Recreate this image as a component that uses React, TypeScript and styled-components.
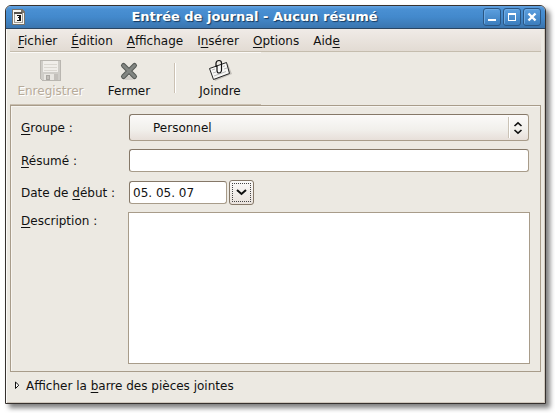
import React from "react";
import styled, { createGlobalStyle, css } from "styled-components";

const edge = "#a89c8a";
const edgeDark = "#857868";

const GlobalStyle = createGlobalStyle`
  * { box-sizing: border-box; }
  body { margin: 0; background: #fff; }
  body, button, input, select, textarea {
    font-family: "DejaVu Sans", sans-serif;
    font-size: 12px;
    line-height: 16px;
    color: #111;
  }
`;

const Desktop = styled.div`
  display: flex;
  min-height: 100vh;
  padding: 5px 9px 9px 5px;
`;

const Window = styled.main`
  flex: 1;
  min-width: 0;
  display: flex;
  flex-direction: column;
  background: #ece9e2;
  border: 1px solid #36312e;
  border-radius: 6px 6px 0 0;
  box-shadow: 4px 4px 5px rgba(0, 0, 0, 0.5);
  overflow: hidden;
`;

const TitleBar = styled.header`
  display: flex;
  align-items: center;
  height: 23px;
  padding: 0 4px 0 6px;
  background: linear-gradient(#65a4e2, #4a90d3 3px, #4389cc 50%, #3a75af);
  border-bottom: 1px solid #2a4562;
`;

const Title = styled.h1`
  flex: 1;
  margin: 0;
  text-align: center;
  white-space: nowrap;
  font-size: 13px;
  font-weight: bold;
  color: #fff;
  text-shadow: 1px 1px 1px #16385c;
`;

const WindowButtons = styled.div`
  display: flex;
  gap: 2px;
`;

const WindowButton = styled.button`
  display: grid;
  place-items: center;
  width: 18px;
  height: 18px;
  padding: 0;
  color: #fff;
  background: linear-gradient(#5c9fdf, #3b7dbd);
  border: 1px solid #2b5683;
  border-radius: 3px;
  box-shadow: inset 1px 1px #6caae4;
`;

const Body = styled.div`
  flex: 1;
  display: flex;
  flex-direction: column;
  padding: 0 3px;
  border-left: 1px solid #fbfaf8;
  box-shadow: inset -1px -1px #cec6bb;
`;

const MenuBar = styled.nav`
  display: flex;
  gap: 14px;
  height: 23px;
  padding: 4px 8px 2px;
  margin-right: 1px;
  background: linear-gradient(#f0ebe7, #e2dbd3);
  border-bottom: 1px solid #c5bdae;
`;

const MenuItem = styled.button`
  padding: 0;
  border: 0;
  background: none;
`;

const Mnemonic = styled.span`
  text-decoration: underline;
  text-decoration-thickness: 1px;
  text-underline-offset: 2px;
`;

const ToolBar = styled.div`
  display: flex;
  align-self: flex-start;
  height: 53px;
  padding: 6px 11px 0 7px;
  border-top: 1px solid #fbfaf8;
  border-bottom: 1px solid #c9bfb0;
`;

const ToolButton = styled.button<{ $width: number }>`
  display: flex;
  flex-direction: column;
  align-items: center;
  width: ${(p) => p.$width}px;
  padding: 0;
  border: 0;
  background: none;
  svg { display: block; }
  &:disabled {
    color: #b7ab9a;
    text-shadow: 1px 1px #fff;
  }
`;

const Separator = styled.div`
  width: 2px;
  height: 30px;
  margin: 4px 14px 0 0;
  border-left: 1px solid #cbc1b3;
  border-right: 1px solid #fff;
`;

const Panel = styled.form`
  flex: 1;
  display: grid;
  grid-template-columns: 107px 1fr;
  grid-template-rows: 27px 23px 25px 1fr;
  row-gap: 8px;
  align-items: center;
  margin-right: 1px;
  padding: 8px 10px 7px 10px;
  border: 1px solid ${edge};
  box-shadow: inset 1px 1px #f7f5f1;
`;

const Label = styled.label<{ $top?: boolean }>`
  white-space: nowrap;
  ${(p) => p.$top && css`align-self: start;`}
`;

const fieldFrame = css`
  border: 1px solid ${edge};
  border-top-color: ${edgeDark};
  border-left-color: ${edgeDark};
  border-radius: 3px;
  outline: none;
`;

const Combo = styled.div`
  display: grid;
  align-items: center;
  margin: 0 1px;
  height: 27px;
`;

const Select = styled.select`
  grid-area: 1 / 1;
  appearance: none;
  width: 100%;
  height: 27px;
  padding: 0 40px 0 23px;
  background: linear-gradient(#fbfaf9, #f1efeb 60%, #e7dfd9);
  ${fieldFrame}
`;

const ComboArrows = styled.div`
  grid-area: 1 / 1;
  justify-self: end;
  display: flex;
  align-items: center;
  height: 21px;
  padding: 0 6px 0 4px;
  border-left: 1px solid #cbc3b6;
  box-shadow: inset 1px 0 #fff;
  pointer-events: none;
`;

const TextInput = styled.input`
  height: 23px;
  min-width: 0;
  margin: 0 1px;
  padding: 0 3px;
  background: #fff;
  ${fieldFrame}
`;

const DateRow = styled.div`
  display: flex;
  align-items: center;
  gap: 1px;
`;

const DateInput = styled(TextInput)`
  width: 98px;
`;

const DropButton = styled.button`
  display: grid;
  width: 25px;
  height: 25px;
  padding: 2px;
  background: linear-gradient(#fbfaf9, #e9e2dc);
  border: 1px solid ${edgeDark};
  border-radius: 3px;
`;

const FocusRing = styled.span`
  display: grid;
  place-items: center;
  border: 1px dotted #444;
`;

const TextArea = styled.textarea`
  align-self: stretch;
  min-height: 80px;
  resize: none;
  padding: 4px;
  background: #fff;
  border: 1px solid ${edge};
  outline: none;
  margin-top: -1px;
`;

const Expander = styled.button`
  display: flex;
  align-items: center;
  gap: 6px;
  height: 31px;
  padding: 0 4px 4px 5px;
  border: 0;
  background: none;
  text-align: left;
`;

const CalendarIcon = () => (
  <svg width="14" height="18" viewBox="0 0 14 18" shapeRendering="crispEdges">
    <path d="M0 1h10l3 3v13H0z" fill="#77736c" />
    <path d="M1 2h8v3h3v11H1z" fill="#f8f7f3" />
    <path d="M2.500 4v10M10.500 5v9M2 14.500h9" stroke="#a09c95" fill="none" />
    <path d="M2 4h8v2H2z" fill="#55514b" />
    <path d="M5 7h4v6H5v-1h2v-2H6V9h1V8H5z" fill="#111" />
  </svg>
);

const FloppyIcon = () => (
  <svg width="24" height="24" viewBox="0 0 24 24" shapeRendering="crispEdges">
    <path d="M1.500 1.500h20v20h-18l-2-2z" fill="#cfcdc8" stroke="#b9b6b0" />
    <path d="M4 2h15v11H4z" fill="#f0eeea" />
    <path d="M5 5.500h13M5 8.500h13M5 11.500h13" stroke="#dad7d1" />
    <path d="M5 15h14v6H5z" fill="#e8e6e1" />
    <path d="M7.500 16.500h3v4h-3z" fill="#c2bfba" stroke="#a9a6a1" />
    <path d="M15 15h4v6h-4z" fill="#c3c0bb" />
  </svg>
);

const CloseIcon = () => (
  <svg width="22" height="24" viewBox="0 0 22 24">
    <ellipse cx="11" cy="19" rx="7" ry="2" fill="#d3d0ca" />
    <path d="M5.500 6.500l11 11M16.500 6.500l-11 11" stroke="#565a56" strokeWidth="5" strokeLinecap="round" />
    <path d="M5.500 6.500l11 11M16.500 6.500l-11 11" stroke="#828682" strokeWidth="3" strokeLinecap="round" />
  </svg>
);

const AttachIcon = () => (
  <svg width="24" height="24" viewBox="0 0 24 24" fill="none">
    <path d="M3 11l17-6 4 10-17 7z" fill="#c4c1bb" />
    <path d="M1.500 9.500l17-6 3 11-16 6z" fill="#f8f8f6" stroke="#222" strokeLinejoin="round" />
    <path d="M4 11l3-1M5 14l3-1M6 17l12-4.500M15 7.500l2-.7M16 10l3-1" stroke="#bbb" />
    <path d="M8 8V4q.5-2.500 3-2.500T13.500 4v7.500q-.5 2.500-2.500 2.500t-2-2.500V6.500" stroke="#111" strokeWidth="1.200" />
  </svg>
);

const menus: [string, string, string][] = [
  ["", "F", "ichier"],
  ["", "É", "dition"],
  ["", "A", "ffichage"],
  ["I", "n", "sérer"],
  ["", "O", "ptions"],
  ["Aid", "e", ""],
];

export default function App() {
  return (
    <>
      <GlobalStyle />
      <Desktop>
        <Window>
          <TitleBar>
            <CalendarIcon />
            <Title>Entrée de journal - Aucun résumé</Title>
            <WindowButtons>
              <WindowButton aria-label="Réduire">
                <svg width="12" height="12"><path d="M2 8h8v2H2z" fill="currentColor" /></svg>
              </WindowButton>
              <WindowButton aria-label="Agrandir">
                <svg width="12" height="12" shapeRendering="crispEdges">
                  <path d="M2 2h8v8H2zM3 4v5h6V4z" fill="currentColor" fillRule="evenodd" />
                </svg>
              </WindowButton>
              <WindowButton aria-label="Fermer la fenêtre">
                <svg width="12" height="12"><path d="M2.500 2.500l7 7M9.500 2.500l-7 7" stroke="currentColor" strokeWidth="2.400" /></svg>
              </WindowButton>
            </WindowButtons>
          </TitleBar>
          <Body>
            <MenuBar>
              {menus.map(([before, key, after]) => (
                <MenuItem key={before + key + after}>
                  {before}<Mnemonic>{key}</Mnemonic>{after}
                </MenuItem>
              ))}
            </MenuBar>
            <ToolBar>
              <ToolButton $width={67} disabled><FloppyIcon />Enregistrer</ToolButton>
              <ToolButton $width={90}><CloseIcon />Fermer</ToolButton>
              <Separator />
              <ToolButton $width={60}><AttachIcon />Joindre</ToolButton>
            </ToolBar>
            <Panel>
              <Label htmlFor="group"><Mnemonic>G</Mnemonic>roupe :</Label>
              <Combo>
                <Select id="group" defaultValue="Personnel">
                  <option>Personnel</option>
                </Select>
                <ComboArrows>
                  <svg width="10" height="14" fill="none" stroke="#111" strokeWidth="1.600">
                    <path d="M1.500 5L5 1.800 8.500 5M1.500 9L5 12.200 8.500 9" />
                  </svg>
                </ComboArrows>
              </Combo>
              <Label htmlFor="summary"><Mnemonic>R</Mnemonic>ésumé :</Label>
              <TextInput id="summary" />
              <Label htmlFor="start">Date de <Mnemonic>d</Mnemonic>ébut :</Label>
              <DateRow>
                <DateInput id="start" defaultValue="05. 05. 07" />
                <DropButton type="button" aria-label="Choisir une date">
                  <FocusRing>
                    <svg width="11" height="7" fill="none" stroke="#111" strokeWidth="2">
                      <path d="M1 1l4.500 4L10 1" />
                    </svg>
                  </FocusRing>
                </DropButton>
              </DateRow>
              <Label htmlFor="description" $top><Mnemonic>D</Mnemonic>escription :</Label>
              <TextArea id="description" />
            </Panel>
            <Expander>
              <svg width="5" height="9"><path d="M.5 1v6.500L3.800 4.200z" fill="#fff" stroke="#111" /></svg>
              <span>Afficher la <Mnemonic>b</Mnemonic>arre des pièces jointes</span>
            </Expander>
          </Body>
        </Window>
      </Desktop>
    </>
  );
}
